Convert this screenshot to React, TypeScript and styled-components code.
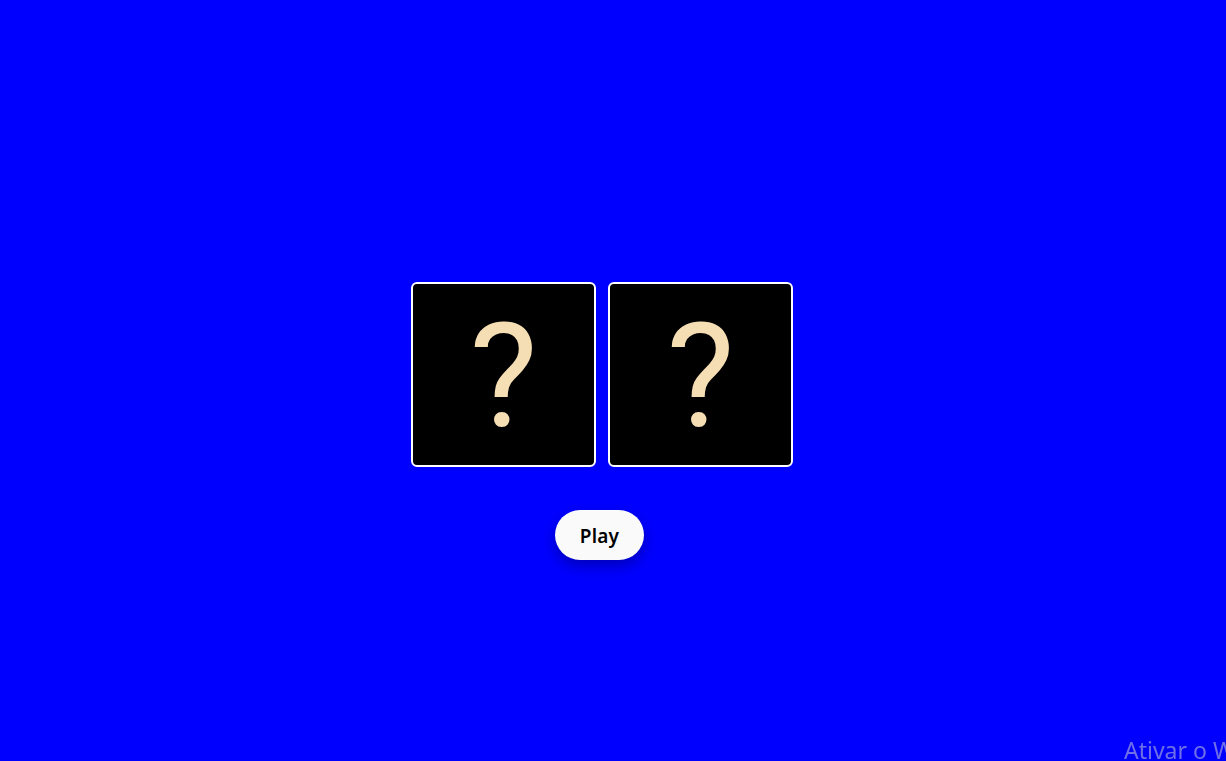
import React from 'react';
import styled, { createGlobalStyle } from 'styled-components';

const GlobalStyle = createGlobalStyle`
  html, body {
    margin: 0;
    padding: 0;
    background: #0000ff;
    overflow: hidden;
  }
  body {
    font-family: Inter, "Noto Sans", sans-serif;
  }
`;

const Page = styled.main`
  min-height: 100vh;
  box-sizing: border-box;
  padding: 282px 22px 0 0;
  display: flex;
  flex-direction: column;
  align-items: center;
`;

const Board = styled.div`
  display: flex;
  gap: 12px;
`;

const Card = styled.div`
  width: 185px;
  height: 185px;
  box-sizing: border-box;
  background: #000;
  border: 2px solid #fff;
  border-radius: 6px;
  display: flex;
  align-items: center;
  justify-content: center;
`;

const Mark = styled.span`
  font-family: Roboto, "Liberation Sans", sans-serif;
  font-size: 144px;
  line-height: 1;
  color: #f5deb3;
  margin-top: 5px;
`;

const PlayButton = styled.button`
  margin: 43px 5px 0 0;
  width: 89px;
  height: 50px;
  border: none;
  border-radius: 25px;
  background: #fafafa;
  color: #000;
  font-family: "Noto Sans", Inter, sans-serif;
  font-weight: 600;
  font-size: 19px;
  letter-spacing: 0.2px;
  padding: 2px 0 0;
  cursor: pointer;
  box-shadow: 0 6px 14px rgba(0, 0, 60, 0.35);
`;

const Watermark = styled.div`
  position: fixed;
  left: 1124px;
  bottom: -5px;
  white-space: nowrap;
  font-family: "Noto Sans", "Open Sans", sans-serif;
  font-size: 23px;
  color: rgba(200, 200, 210, 0.55);
  pointer-events: none;
`;

const App: React.FC = () => {
  return (
    <>
      <GlobalStyle />
      <Page>
        <Board>
          <Card>
            <Mark>?</Mark>
          </Card>
          <Card>
            <Mark>?</Mark>
          </Card>
        </Board>
        <PlayButton>Play</PlayButton>
      </Page>
      <Watermark>Ativar o Windows</Watermark>
    </>
  );
};

export default App;
